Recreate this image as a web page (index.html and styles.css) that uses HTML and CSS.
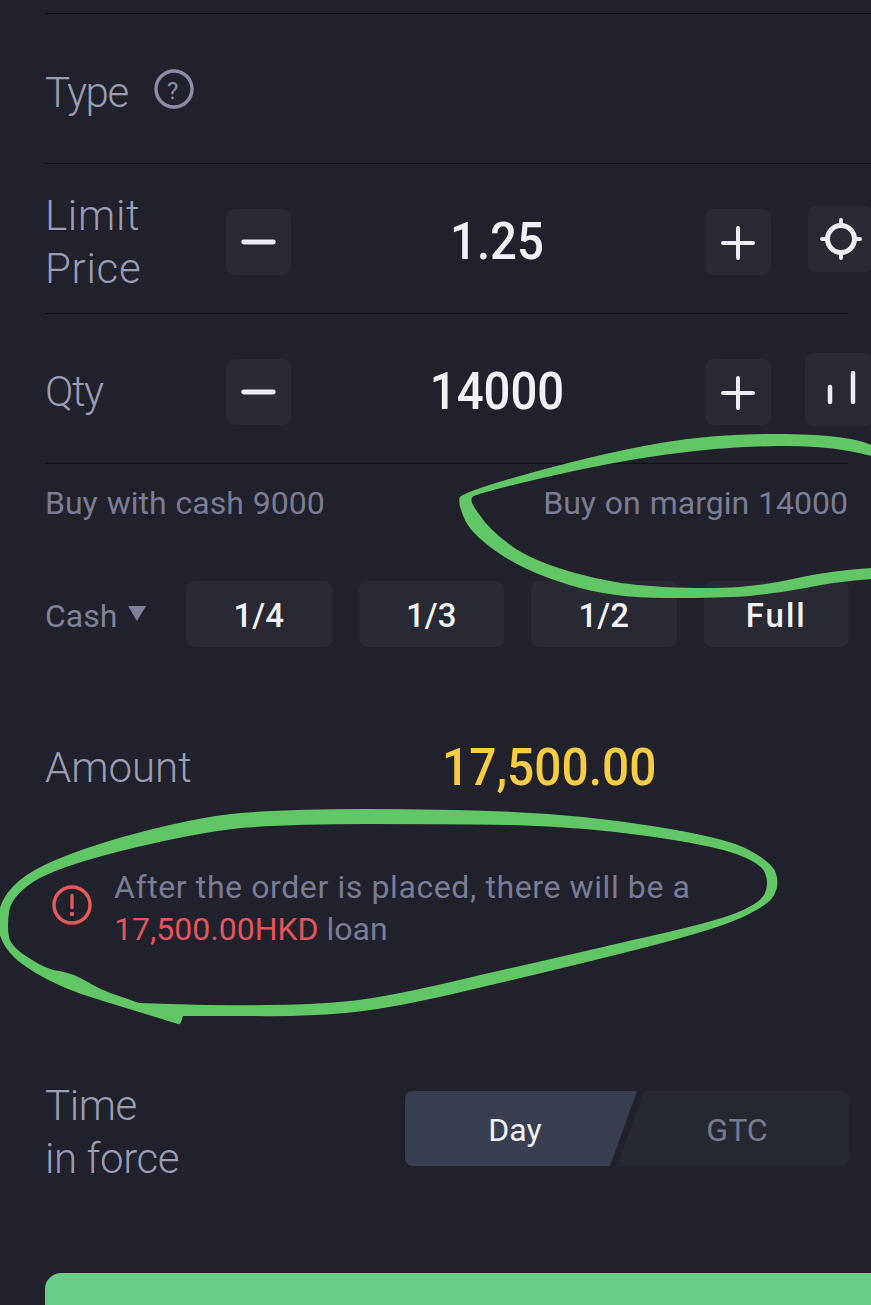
FILE: index.html
```html
<!DOCTYPE html>
<html lang="en">
<head>
<meta charset="utf-8">
<title>Order ticket</title>
<link rel="stylesheet" href="styles.css">
</head>
<body>
<main class="ticket">
  <section class="row row-type">
    <span class="label label-tight">Type</span>
    <svg class="help-icon" viewBox="0 0 40 40" aria-hidden="true"><circle cx="20" cy="20" r="18" fill="none" stroke="#8b8da6" stroke-width="3.4"/></svg>
    <span class="help-mark">?</span>
  </section>

  <section class="row row-short">
    <span class="label label-stack label-loose">Limit<br>Price</span>
    <button class="step"><svg viewBox="0 0 66 66"><path d="M18 33h30" stroke="#eeeef2" stroke-width="5" stroke-linecap="round"/></svg></button>
    <span class="value">1.25</span>
    <button class="step step-plus"><svg viewBox="0 0 66 66"><path d="M18 34h30M33 19v30" stroke="#eeeef2" stroke-width="4" stroke-linecap="round" fill="none"/></svg></button>
    <button class="tool tool-locate"><svg viewBox="0 0 66 66"><circle cx="33" cy="33" r="13.5" fill="none" stroke="#eeeef2" stroke-width="5"/><path d="M33 14v6M33 46v6M14 33h6M46 33h6" stroke="#eeeef2" stroke-width="4" stroke-linecap="round"/></svg></button>
  </section>

  <section class="row row-short row-qty">
    <span class="label label-tight">Qty</span>
    <button class="step"><svg viewBox="0 0 66 66"><path d="M18 33h30" stroke="#eeeef2" stroke-width="5" stroke-linecap="round"/></svg></button>
    <span class="value">14000</span>
    <button class="step step-plus"><svg viewBox="0 0 66 66"><path d="M18 34h30M33 19v30" stroke="#eeeef2" stroke-width="4" stroke-linecap="round" fill="none"/></svg></button>
    <button class="tool tool-bars"><svg viewBox="0 0 68 73"><path d="M25 34v15M48 20v29" stroke="#eeeef2" stroke-width="4.5" stroke-linecap="round"/></svg></button>
  </section>

  <section class="buying-power">
    <span>Buy with cash 9000</span>
    <span>Buy on margin 14000</span>
  </section>

  <section class="quick">
    <span class="cash">Cash<i class="caret"></i></span>
    <button class="chip">1/4</button>
    <button class="chip">1/3</button>
    <button class="chip">1/2</button>
    <button class="chip chip-full">Full</button>
  </section>

  <section class="amount">
    <span class="label">Amount</span>
    <span class="amount-value">17,500.00</span>
  </section>

  <section class="notice">
    <svg class="notice-icon" viewBox="0 0 40 40" aria-hidden="true"><circle cx="20" cy="20" r="18" fill="none" stroke="#e85a5a" stroke-width="3.4"/><path d="M20 10.5v12" stroke="#e85a5a" stroke-width="3.4" stroke-linecap="round"/><circle cx="20" cy="29" r="2.2" fill="#e85a5a"/></svg>
    <p><span class="notice-lead">After the order is placed, there will be a</span><br><em>17,500.00HKD</em> loan</p>
  </section>

  <section class="tif">
    <span class="label label-stack label-snug">Time<br>in force</span>
    <div class="segment">
      <span class="seg seg-on">Day</span>
      <span class="seg seg-off">GTC</span>
    </div>
  </section>

  <button class="submit"></button>
</main>

<!-- Hand-drawn green marker rings over the ticket -->
<svg class="ink" viewBox="0 0 871 1305" aria-hidden="true">
  <path fill-rule="evenodd" d="M871 445 Q850 435 786 434 Q722 433 666.5 442 Q611 451 536 471.5 Q461 492 459.5 498 Q458 505 465 520 Q472 535 500 554 Q528 573 569.5 585 Q611 598 666.5 598 Q722 598 750 596 Q778 593 805.5 588 Q833 582 871 579 L871 568 Q828 571 797.5 578 Q767 585 739 587 Q711 589 664 587 Q617 585 575 573 Q533 561 513 547 Q489 530 479 514 Q468 500 473 496.5 Q478 493 544.5 477.5 Q611 462 666.5 454.5 Q722 447 777.5 446 Q833 445 871 456 Z"/>
  <path fill-rule="evenodd" d="M178 1024 L100 1000 Q56 987 28 968 Q0 950 -2 925 Q-4 900 20 880 Q44 860 119 838 Q194 817 241 813 Q289 809 366 809 Q444 809 513 812 Q583 815 652 826 Q722 837 745 848 Q769 860 775 871 Q780 883 775 893 Q772 903 747 915 Q722 928 639 949 Q556 970 478 988 Q400 1007 355 1012 Q311 1017 247 1016 L183 1016 L181 1022 Q180 1025 178 1024 Z M139 1003 Q222 1006 266 1005 Q311 1005 350 1001 Q389 997 472 977 Q556 958 633 940 Q711 923 736 913 Q761 903 765 893 Q769 883 765 873 Q761 863 736 854 Q711 845 647 836 Q583 827 513 825 Q444 824 366 824 Q289 824 241 828 Q194 833 125 850 Q56 867 33 882 Q11 897 9 912 Q7 927 9 937 Q11 947 29 958 Q47 970 59 971 Q72 973 86 981 Q100 990 119 996 Z"/>
</svg>
</body>
</html>
```

FILE: styles.css
```css
* { box-sizing: border-box; }

html, body {
  margin: 0;
  height: 1305px;
  overflow: hidden;
  background: #20212a;
}

body {
  position: relative;
  font-family: "Roboto", "Liberation Sans", sans-serif;
  color: #8e90a8;
}

.ticket {
  padding: 13px 0 0 45px;
  width: 871px;
}

button {
  border: 0;
  padding: 0;
  font: inherit;
  color: inherit;
}

.label {
  font-size: 42px;
  font-weight: 300;
  line-height: 53px;
  color: #9a9cb4;
}

.label-stack { display: block; }
.label-tight { letter-spacing: -1.5px; }
.label-loose { letter-spacing: .7px; }
.label-snug { letter-spacing: -.4px; }

.row {
  display: flex;
  align-items: center;
  height: 150px;
  padding-top: 6px;
  border-top: 1px solid #0f1015;
  margin-right: -1px;
}

.row-type {
  position: relative;
  gap: 26px;
  height: 151px;
  padding-top: 8px;
  border-bottom: 1px solid #0f1015;
}

.row-short {
  position: relative;
  margin-right: 23px;
  border-top: 0;
  border-bottom: 1px solid #0f1015;
}

.help-icon {
  width: 40px;
  height: 40px;
  margin-top: -8px;
}

.help-mark {
  position: absolute;
  left: 122px;
  top: 62px;
  font-size: 24px;
  line-height: 30px;
  color: #8b8da6;
}

.row-short .label { width: 181px; flex: none; }

.step {
  flex: none;
  width: 65px;
  height: 66px;
  margin-top: 1px;
  border-radius: 8px;
  background: #282932;
}

.step-plus { width: 66px; }

.step svg, .tool svg {
  display: block;
  width: 100%;
  height: 100%;
}

.value {
  flex: none;
  width: 412px;
  margin-right: 2px;
  text-align: center;
  font-size: 52px;
  font-weight: 500;
  line-height: 60px;
  color: #f2f2f5;
  transform: scaleX(.91);
}

.tool {
  position: absolute;
  background: #282932;
  border-radius: 8px;
}

.tool-locate {
  left: 763px;
  top: 42px;
  width: 66px;
  height: 66px;
}

.tool-bars {
  left: 760px;
  top: 39px;
  width: 68px;
  height: 73px;
}

.buying-power {
  display: flex;
  justify-content: space-between;
  align-items: center;
  height: 78px;
  margin-right: 23px;
  font-size: 32px;
  word-spacing: 1px;
  color: #7a7c95;
}

.quick {
  display: flex;
  align-items: center;
  gap: 27px;
  margin-top: 39px;
  margin-right: 22px;
}

.cash {
  display: flex;
  align-items: center;
  width: 114px;
  padding-top: 3px;
  font-size: 32px;
  color: #7f8199;
}

.caret {
  width: 0;
  height: 0;
  margin: -4px 0 0 11px;
  border-left: 9px solid transparent;
  border-right: 9px solid transparent;
  border-top: 15px solid #7f8199;
}

.chip {
  flex: 1;
  height: 66px;
  padding-top: 3px;
  border-radius: 8px;
  background: #282932;
  font-size: 33px;
  font-weight: 500;
  color: #f2f2f5;
}

.chip-full { letter-spacing: 2px; }

.amount {
  display: flex;
  align-items: center;
  height: 53px;
  margin-top: 94px;
}

.amount .label { width: 397px; }

.amount-value {
  font-size: 52px;
  font-weight: 500;
  line-height: 60px;
  color: #f6cd45;
  transform: scaleX(.92);
  transform-origin: left center;
}

.notice {
  display: flex;
  align-items: center;
  gap: 22px;
  margin-top: 72px;
  margin-left: 7px;
}

.notice-icon {
  flex: none;
  width: 40px;
  height: 40px;
  margin-top: -6px;
}

.notice p {
  margin: 0;
  font-size: 32px;
  line-height: 42px;
  color: #7a7c95;
}

.notice-lead { letter-spacing: .6px; }

.notice em {
  font-style: normal;
  color: #e2545f;
}

.tif {
  display: flex;
  align-items: flex-start;
  height: 106px;
  margin-top: 129px;
  margin-right: 22px;
}

.tif .label { width: 360px; }

.segment {
  display: flex;
  flex: 1;
  height: 75px;
  margin-top: 12px;
}

.seg {
  display: flex;
  align-items: center;
  justify-content: center;
  padding-top: 3px;
  font-size: 32px;
}

.seg-on {
  flex: none;
  width: 232px;
  padding-right: 12px;
  border-radius: 8px 0 0 8px;
  background: #393e50;
  color: #f2f2f5;
  clip-path: polygon(0 0, 100% 0, calc(100% - 27px) 100%, 0 100%);
}

.seg-off {
  flex: 1;
  margin-left: -20px;
  padding-left: 8px;
  border-radius: 0 8px 8px 0;
  background: #262830;
  color: #77798f;
  clip-path: polygon(27px 0, 100% 0, 100% 100%, 0 100%);
}

.submit {
  display: block;
  width: 860px;
  height: 60px;
  margin-top: 88px;
  border-radius: 16px 0 0 0;
  background: #69cd89;
}

.ink {
  position: absolute;
  left: 0;
  top: 0;
  width: 871px;
  height: 1305px;
  fill: #62c666;
  pointer-events: none;
}
```
